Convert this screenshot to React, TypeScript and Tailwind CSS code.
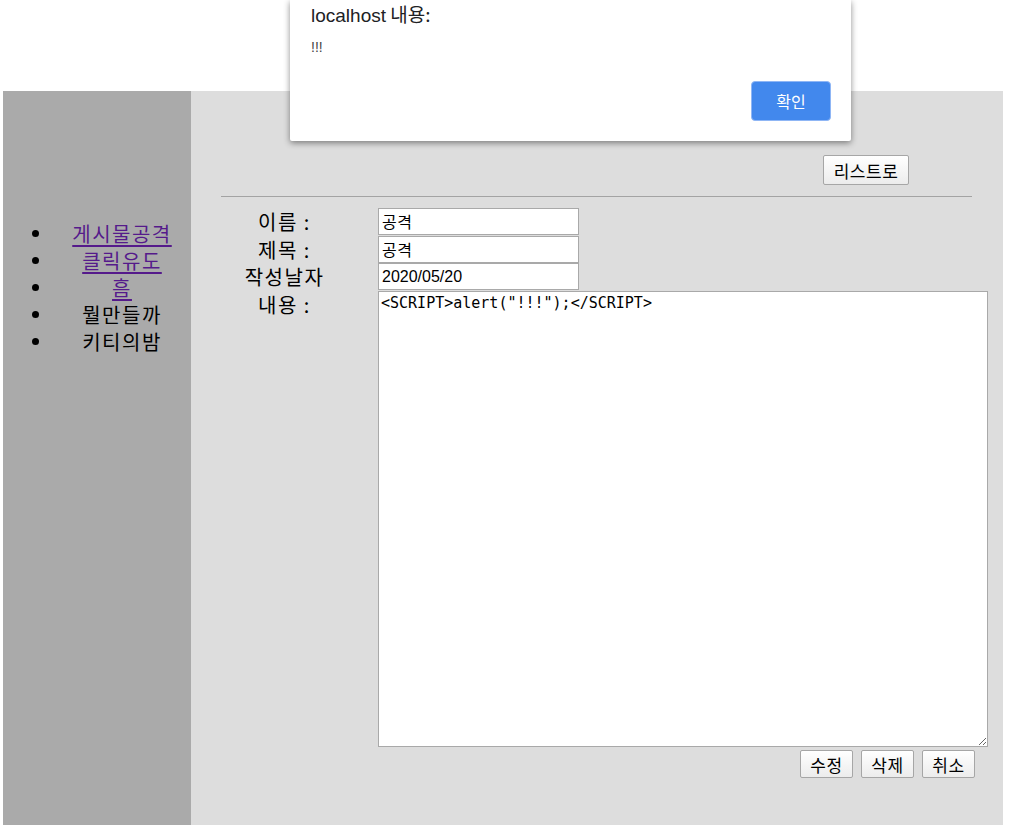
import React from "react";

const kr = { fontFamily: '"Noto Sans CJK KR", "Noto Sans", sans-serif' };

function Bullet() {
  return <span className="absolute left-[29px] top-[10px] w-[7px] h-[7px] rounded-full bg-black" />;
}

function NavItem({ label, link }: { label: string; link?: boolean }) {
  return (
    <li className="relative h-[27px] flex">
      <Bullet />
      <span className="ml-[50px] w-[138px] text-center text-[20px] leading-[27px] tracking-[1.5px]">
        {link ? (
          <a href="#" className="text-[#551a8b] underline underline-offset-[3px]">
            {label}
          </a>
        ) : (
          <span className="text-black">{label}</span>
        )}
      </span>
    </li>
  );
}

function Btn({ children, className = "" }: { children: React.ReactNode; className?: string }) {
  return (
    <button
      className={
        "border border-[#a6a6a6] bg-gradient-to-b from-white to-[#ececec] text-black text-[17px] leading-none rounded-[2px] tracking-[0.5px] " +
        className
      }
      style={kr}
    >
      {children}
    </button>
  );
}

export default function App() {
  return (
    <div className="relative w-[1026px] h-[825px] bg-white overflow-hidden" style={kr}>
      <div className="flex pt-[91px] pl-[3px] h-full">
        <aside className="w-[188px] h-full bg-[#aaaaaa]">
          <ul className="pt-[129px]">
            <NavItem label="게시물공격" link />
            <NavItem label="클릭유도" link />
            <NavItem label="흠" link />
            <NavItem label="뭘만들까" />
            <NavItem label="키티의밤" />
          </ul>
        </aside>
        <main className="w-[812px] h-full bg-[#dddddd] flex flex-col">
          <div className="flex justify-end pt-[64px] pr-[94px]">
            <Btn className="w-[86px] h-[30px]">리스트로</Btn>
          </div>
          <div className="mt-[11px] ml-[30px] w-[751px] h-px bg-[#a3a3a3]" />
          <div className="mt-[11px] flex flex-col">
            <div className="flex h-[28px]">
              <div className="w-[187px] text-center text-[20px] leading-[27px] tracking-[1.5px]">이름 :</div>
              <div className="w-[201px] h-[27px] bg-white border border-[#a9a9a9] pl-[3px] text-[16px] leading-[25px] tracking-[0.5px]">공격</div>
            </div>
            <div className="flex h-[27px]">
              <div className="w-[187px] text-center text-[20px] leading-[27px] tracking-[1.5px]">제목 :</div>
              <div className="w-[201px] h-[27px] bg-white border border-[#a9a9a9] pl-[3px] text-[16px] leading-[25px] tracking-[0.5px]">공격</div>
            </div>
            <div className="flex h-[28px]">
              <div className="w-[187px] text-center text-[20px] leading-[27px] tracking-[1.5px]">작성날자</div>
              <div
                className="w-[201px] h-[27px] bg-white border border-[#a9a9a9] pl-[3px] text-[16px] leading-[25px]"
                style={{ fontFamily: '"Liberation Sans", Arial, sans-serif' }}
              >
                2020/05/20
              </div>
            </div>
            <div className="flex">
              <div className="w-[187px] text-center text-[20px] leading-[27px] tracking-[1.5px]">내용 :</div>
              <textarea
                readOnly
                className="w-[610px] h-[456px] bg-white border border-[#a9a9a9] px-[2px] py-[2px] text-[15px] leading-[18px] text-black outline-none"
                style={{ fontFamily: '"DejaVu Sans Mono", "Liberation Mono", monospace' }}
                defaultValue={'<SCRIPT>alert("!!!");</SCRIPT>'}
              />
            </div>
            <div className="flex justify-end gap-[8px] mt-[3px] pr-[28px]">
              <Btn className="w-[53px] h-[28px]">수정</Btn>
              <Btn className="w-[53px] h-[28px]">삭제</Btn>
              <Btn className="w-[53px] h-[28px]">취소</Btn>
            </div>
          </div>
        </main>
      </div>

      <div className="absolute left-[290px] top-0 w-[561px] h-[141px] bg-white shadow-[0_2px_6px_rgba(0,0,0,0.45)] rounded-b-[2px]">
        <div className="pl-[21px] pt-[1px] text-[19px] leading-[26px] text-[#202124]">
          <span style={{ fontFamily: '"Liberation Sans", Arial, sans-serif' }}>localhost</span> 내용:
        </div>
        <div
          className="pl-[21px] mt-[9px] text-[14px] leading-[18px] text-[#444444]"
          style={{ fontFamily: '"Liberation Sans", Arial, sans-serif' }}
        >
          !!!
        </div>
        <div className="absolute left-[461px] top-[81px] w-[80px] h-[40px] rounded-[4px] bg-[#4288ed] border border-[#8fb6f5] flex items-center justify-center text-white text-[16px]">
          확인
        </div>
      </div>
    </div>
  );
}
